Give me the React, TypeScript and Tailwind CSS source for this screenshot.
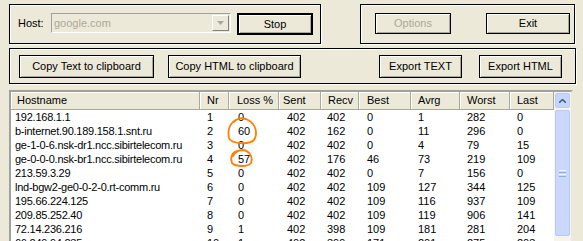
import React from 'react';

type Hop = {
  host: string;
  nr: number;
  loss: number;
  sent: number;
  recv: number;
  best: number;
  avrg: number;
  worst: number;
  last: number;
};

const hops: Hop[] = [
  { host: '192.168.1.1', nr: 1, loss: 0, sent: 402, recv: 402, best: 0, avrg: 1, worst: 282, last: 0 },
  { host: 'b-internet.90.189.158.1.snt.ru', nr: 2, loss: 60, sent: 402, recv: 162, best: 0, avrg: 11, worst: 296, last: 0 },
  { host: 'ge-1-0-6.nsk-dr1.ncc.sibirtelecom.ru', nr: 3, loss: 0, sent: 402, recv: 402, best: 0, avrg: 4, worst: 79, last: 15 },
  { host: 'ge-0-0-0.nsk-br1.ncc.sibirtelecom.ru', nr: 4, loss: 57, sent: 402, recv: 176, best: 46, avrg: 73, worst: 219, last: 109 },
  { host: '213.59.3.29', nr: 5, loss: 0, sent: 402, recv: 402, best: 0, avrg: 7, worst: 156, last: 0 },
  { host: 'lnd-bgw2-ge0-0-2-0.rt-comm.ru', nr: 6, loss: 0, sent: 402, recv: 402, best: 109, avrg: 127, worst: 344, last: 125 },
  { host: '195.66.224.125', nr: 7, loss: 0, sent: 402, recv: 402, best: 109, avrg: 116, worst: 937, last: 109 },
  { host: '209.85.252.40', nr: 8, loss: 0, sent: 402, recv: 402, best: 109, avrg: 119, worst: 906, last: 141 },
  { host: '72.14.236.216', nr: 9, loss: 1, sent: 402, recv: 398, best: 109, avrg: 181, worst: 281, last: 204 },
  { host: '66.249.94.235', nr: 10, loss: 1, sent: 402, recv: 399, best: 171, avrg: 201, worst: 275, last: 203 },
];

// column widths in px, measured off the screenshot
const cols = [
  { label: 'Hostname', w: 'w-[189px]', pl: 'pl-[6px]', cl: 'pl-[4px]' },
  { label: 'Nr', w: 'w-[29px]', pl: 'pl-[7px]', cl: 'pl-[7px]' },
  { label: 'Loss %', w: 'w-[50px]', pl: 'pl-[8px]', cl: 'pl-[9px]' },
  { label: 'Sent', w: 'w-[42px]', pl: 'pl-[4px]', cl: 'pl-[8px]' },
  { label: 'Recv', w: 'w-[38px]', pl: 'pl-[7px]', cl: 'pl-[6px]' },
  { label: 'Best', w: 'w-[52px]', pl: 'pl-[8px]', cl: 'pl-[8px]' },
  { label: 'Avrg', w: 'w-[49px]', pl: 'pl-[7px]', cl: 'pl-[7px]' },
  { label: 'Worst', w: 'w-[50px]', pl: 'pl-[7px]', cl: 'pl-[7px]' },
  { label: 'Last', w: 'w-[44px]', pl: 'pl-[7px]', cl: 'pl-[7px]' },
];

function Btn({ children, className, disabled, def }: { children: React.ReactNode; className: string; disabled?: boolean; def?: boolean }) {
  return (
    <div
      className={`flex items-center justify-center bg-[#ece9d8] ${
        def ? 'border-2' : 'border'
      } border-black shadow-[inset_1px_1px_0_#fff,inset_-1px_-1px_0_#aca899] ${
        disabled ? 'text-[#aca899]' : 'text-black'
      } ${className}`}
    >
      {children}
    </div>
  );
}

export default function App() {
  return (
    <div
      className="relative w-[583px] h-[241px] overflow-hidden bg-[#ece9d8] text-[11px] leading-none text-black"
      style={{ fontFamily: '"Liberation Sans", Arial, sans-serif' }}
    >
      {/* Top row: host + run controls */}
      <div className="flex pt-[4px] pl-[9px]">
        <div className="flex items-start w-[312px] h-[40px] border border-black shadow-[inset_1px_1px_0_#fff,1px_1px_0_#fff] pt-[8px] pl-[8px]">
          <span className="mt-[5px] w-[33px]">Host:</span>
          <div className="flex items-center w-[180px] h-[20px] border border-[#a0a0a0] border-r-white border-b-white pl-[2px] text-[#aca899]">
            <span className="flex-1">google.com</span>
            <div className="flex items-center justify-center w-[17px] h-[16px] mr-[1px] bg-[#ece9d8] border border-white border-r-[#808080] border-b-[#808080]">
              <svg width="7" height="4" viewBox="0 0 7 4">
                <path d="M0 0h7L3.5 4z" fill="#aca899" />
              </svg>
            </div>
          </div>
          <Btn def className="ml-[6px] w-[76px] h-[22px]">Stop</Btn>
        </div>
        <div className="flex items-start ml-[39px] w-[215px] h-[40px] border border-black shadow-[inset_1px_1px_0_#fff,1px_1px_0_#fff] pt-[8px] pl-[14px]">
          <Btn disabled className="w-[76px] h-[21px]">Options</Btn>
          <Btn className="ml-[35px] w-[84px] h-[21px]">Exit</Btn>
        </div>
      </div>

      {/* Export row */}
      <div className="flex items-start mt-[4px] ml-[9px] w-[567px] h-[36px] border border-black shadow-[inset_1px_1px_0_#fff,1px_1px_0_#fff] pt-[6px] pl-[9px]">
        <Btn className="w-[135px] h-[23px]">Copy Text to clipboard</Btn>
        <Btn className="ml-[14px] w-[133px] h-[23px]">Copy HTML to clipboard</Btn>
        <Btn className="ml-[78px] w-[83px] h-[23px]">Export TEXT</Btn>
        <Btn className="ml-[17px] w-[83px] h-[23px]">Export HTML</Btn>
      </div>

      {/* Trace list */}
      <div className="flex mt-[6px] ml-[9px] w-[564px] h-[200px] border-2 border-[#a0a0a0] border-r-[#ece9d8] bg-white">
        <div className="flex flex-col w-[543px]">
          <div className="flex h-[18px] bg-[#ece9d8]">
            {cols.map((c) => (
              <div
                key={c.label}
                className={`${c.w} ${c.pl} flex items-center shrink-0 border-r border-b border-[#aca899] shadow-[inset_1px_1px_0_#fff]`}
              >
                {c.label}
              </div>
            ))}
          </div>
          {hops.map((h) => {
            const vals = [h.host, h.nr, h.loss, h.sent, h.recv, h.best, h.avrg, h.worst, h.last];
            return (
              <div key={h.nr} className="flex h-[14px] items-center">
                {vals.map((v, i) => (
                  <div
                    key={i}
                    className={`${cols[i].w} ${cols[i].cl} shrink-0 whitespace-nowrap ${i === 0 ? 'tracking-[-0.25px]' : ''}`}
                  >
                    {v}
                  </div>
                ))}
              </div>
            );
          })}
        </div>
        {/* XP scrollbar */}
        <div className="flex flex-col w-[17px] bg-[#f5f4ef] pt-[1px] pl-[1px]">
          <div className="flex items-center justify-center w-[15px] h-[15px] rounded-[2px] border border-[#b7cbf5] bg-[#c5d5fc]">
            <svg width="7" height="4" viewBox="0 0 7 4">
              <path d="M0 4L3.5 0.5L7 4" fill="none" stroke="#4d6185" strokeWidth="1.6" />
            </svg>
          </div>
          <div className="flex flex-col items-center justify-center gap-[1px] mt-[2px] w-[15px] h-[126px] rounded-[2px] border border-[#b7cbf5] bg-[#c9d8fc]">
            <div className="w-[7px] h-px bg-[#eef3fe]" />
            <div className="w-[7px] h-px bg-[#8fa9e8]" />
            <div className="w-[7px] h-px bg-[#eef3fe]" />
            <div className="w-[7px] h-px bg-[#8fa9e8]" />
          </div>
        </div>
      </div>

      {/* hand-drawn highlight marks */}
      <svg className="absolute left-0 top-0 pointer-events-none" width="583" height="241">
        <path
          d="M238 119 C231 121 227 129 229 138 C231 144 249 145 254 140 C258 134 256 124 248 120 C243 117 237 118 234 122"
          fill="none"
          stroke="#ff8000"
          strokeWidth="1.8"
          strokeLinecap="round"
        />
        <path
          d="M238 151 C232 152 230 157 232 163 C236 167 248 167 251 163 C253 157 250 151 243 150 C239 150 235 152 233 156"
          fill="none"
          stroke="#ff8000"
          strokeWidth="1.8"
          strokeLinecap="round"
        />
      </svg>
    </div>
  );
}
